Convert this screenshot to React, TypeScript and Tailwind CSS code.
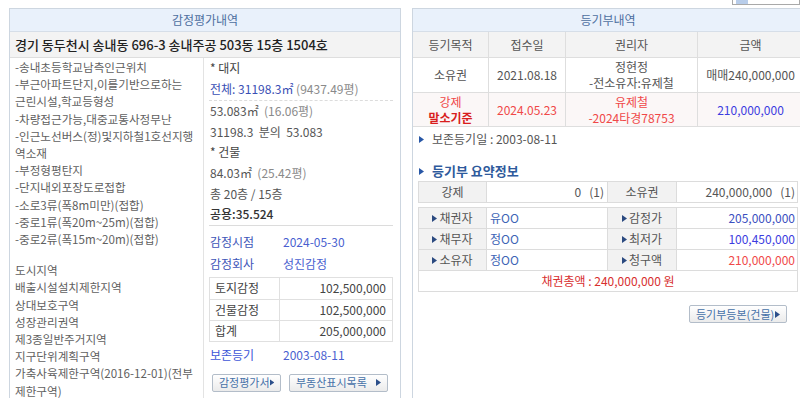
import React from "react"

const Tri = ({ className = "" }: { className?: string }) => (
  <svg width="5" height="7" viewBox="0 0 5 7" className={className}>
    <polygon points="0,0 5,3.5 0,7" fill="currentColor" />
  </svg>
)

function Btn({ label, w }: { label: string; w: string }) {
  return (
    <button
      className={`${w} h-[18px] pl-[6px] pr-[6px] border border-[#b3bdc9] rounded-[2px] bg-linear-to-b from-white to-[#ebebeb] text-[11px] leading-none text-[#4671a8] flex items-center justify-between`}
    >
      <span>{label}</span>
      <Tri className="text-[#2c4f8a]" />
    </button>
  )
}

const descA = [
  "-송내초등학교남측인근위치",
  "-부근아파트단지,이를기반으로하는",
  "근린시설,학교등형성",
  "-차량접근가능,대중교통사정무난",
  "-인근노선버스(정)및지하철1호선지행",
  "역소재",
  "-부정형평탄지",
  "-단지내외포장도로접합",
  "-소로3류(폭8m미만)(접합)",
  "-중로1류(폭20m~25m)(접합)",
  "-중로2류(폭15m~20m)(접합)",
]

const descB = [
  "도시지역",
  "배출시설설치제한지역",
  "상대보호구역",
  "성장관리권역",
  "제3종일반주거지역",
  "지구단위계획구역",
  "가축사육제한구역(2016-12-01)(전부",
  "제한구역)",
]

function LeftPanel() {
  return (
    <div className="w-[392px] shrink-0 border border-[#cdd6e0] bg-white">
      <div className="h-[23px] bg-[#e9f1fb] border-b border-[#d6dee8] flex items-center justify-center text-[12px] text-[#4d6f9f]">
        감정평가내역
      </div>
      <div className="h-[26px] bg-[#f3f3f3] border-b border-[#dedede] flex items-center px-[5px] text-[13px] font-medium text-[#222]">
        경기 동두천시 송내동 696-3 송내주공 503동 15층 1504호
      </div>
      <div className="flex">
        {/* description */}
        <div className="w-[194px] shrink-0 border-r border-[#e3e3e3] pl-[5px] text-[11.6px] leading-[17.2px] text-[#5f5f5f] whitespace-nowrap overflow-hidden">
          <div className="pt-[1px]">
            {descA.map((t) => (
              <div key={t}>{t}</div>
            ))}
          </div>
          <div className="mt-[14px]">
            {descB.map((t) => (
              <div key={t}>{t}</div>
            ))}
          </div>
        </div>

        {/* area / appraisal */}
        <div className="flex-1 pl-[5px] pr-[7px] text-[12px] text-[#555] whitespace-nowrap">
          <div className="leading-[20.6px] pb-[1px] border-b border-dashed border-[#dcdcdc] px-[1px]">
            <div className="text-[#444]">* 대지</div>
            <div>
              <span className="text-[#3a4fb4]">전체: 31198.3㎡</span>{" "}
              <span className="text-[#8a8a8a]">(9437.49평)</span>
            </div>
          </div>
          <div className="leading-[20.6px] border-b border-[#dcdcdc] px-[1px]">
            <div>
              53.083㎡ <span className="text-[#8a8a8a]">&nbsp;(16.06평)</span>
            </div>
            <div>31198.3&nbsp; 분의&nbsp; 53.083</div>
            <div className="text-[#444]">* 건물</div>
            <div>
              84.03㎡ <span className="text-[#8a8a8a]">&nbsp;(25.42평)</span>
            </div>
            <div>총 20층 / 15층</div>
            <div className="text-[#333] font-medium">공용:35.524</div>
          </div>
          <div className="pt-[5px] leading-[22px] px-[1px]">
            <div className="flex">
              <span className="w-[73px] text-[#3d55b8]">감정시점</span>
              <span className="text-[#4a5fd0]">2024-05-30</span>
            </div>
            <div className="flex">
              <span className="w-[73px] text-[#3d55b8]">감정회사</span>
              <span className="text-[#4a5fd0]">성진감정</span>
            </div>
          </div>
          <div className="mt-[2px] border border-[#e0e0e0] text-[#444]">
            {[
              ["토지감정", "102,500,000"],
              ["건물감정", "102,500,000"],
              ["합계", "205,000,000"],
            ].map(([k, v], i) => (
              <div key={k} className={`flex h-[21px] items-center ${i > 0 ? "border-t border-[#e0e0e0]" : ""}`}>
                <div className="w-[70px] h-full flex items-center pl-[5px] border-r border-[#e0e0e0]">{k}</div>
                <div className="flex-1 text-right pr-[6px]">{v}</div>
              </div>
            ))}
          </div>
          <div className="mt-[1px] leading-[24px] flex px-[1px]">
            <span className="w-[73px] text-[#3d55d8]">보존등기</span>
            <span className="text-[#4a5fd0]">2003-08-11</span>
          </div>
          <div className="mt-[7px] flex gap-[8px] pl-[3px]">
            <Btn label="감정평가서" w="w-[69px]" />
            <Btn label="부동산표시목록" w="w-[99px]" />
          </div>
        </div>
      </div>
    </div>
  )
}

const cols = "grid grid-cols-[76px_77px_132px_105px]"
const sumCols = "grid grid-cols-[68px_121px_69px_121px]"

function RightPanel() {
  return (
    <div className="w-[392px] shrink-0 border border-[#cdd6e0] bg-white text-[12px]">
      <div className="h-[23px] bg-[#e9f1fb] border-b border-[#d6dee8] flex items-center justify-center text-[12px] text-[#4d6f9f]">
        등기부내역
      </div>

      {/* register table */}
      <div className={`${cols} h-[26px] bg-[#f3f3f3] border-b border-[#dedede] text-[#555]`}>
        {["등기목적", "접수일", "권리자", "금액"].map((h, i) => (
          <div key={h} className={`flex items-center justify-center ${i < 3 ? "border-r border-[#dedede]" : ""}`}>
            {h}
          </div>
        ))}
      </div>
      <div className={`${cols} h-[35px] border-b border-[#dedede] text-[#555] leading-[16px] text-center`}>
        <div className="flex items-center justify-center border-r border-[#dedede]">소유권</div>
        <div className="flex items-center justify-center border-r border-[#dedede]">2021.08.18</div>
        <div className="flex flex-col items-center justify-center border-r border-[#dedede]">
          <div>정현정</div>
          <div>-전소유자:유제철</div>
        </div>
        <div className="flex items-center justify-center">매매240,000,000</div>
      </div>
      <div className={`${cols} h-[34px] border-b border-[#dedede] bg-[#fbf7f7] leading-[16px] text-center text-[#f04848]`}>
        <div className="flex flex-col items-center justify-center border-r border-[#dedede]">
          <div>강제</div>
          <div className="font-bold text-[#d81e1e]">말소기준</div>
        </div>
        <div className="flex items-center justify-center border-r border-[#dedede]">2024.05.23</div>
        <div className="flex flex-col items-center justify-center border-r border-[#dedede]">
          <div>유제철</div>
          <div>-2024타경78753</div>
        </div>
        <div className="flex items-center justify-center text-[#3c3ce0]">210,000,000</div>
      </div>

      <div className="px-[5px]">
        <div className="mt-[2px] h-[20px] flex items-center text-[#555]">
          <Tri className="text-[#2857a6] ml-[1px] mr-[8px]" />
          보존등기일 : 2003-08-11
        </div>
        <div className="mt-[12px] h-[20px] flex items-center text-[13px] font-bold text-[#2e5a9c]">
          <Tri className="text-[#2857a6] ml-[1px] mr-[8px]" />
          등기부 요약정보
        </div>

        {/* summary */}
        <div className={`${sumCols} h-[22px] border border-[#dcdcdc] text-[#555]`}>
          <div className="flex items-center justify-center bg-[#f2f2f2] border-r border-[#dcdcdc]">강제</div>
          <div className="flex items-center justify-end pr-[3px] border-r border-[#dcdcdc] whitespace-pre">0   (1)</div>
          <div className="flex items-center justify-center bg-[#f2f2f2] border-r border-[#dcdcdc]">소유권</div>
          <div className="flex items-center justify-end pr-[3px] whitespace-pre">240,000,000   (1)</div>
        </div>

        <div className="mt-[4px] border border-[#dcdcdc]">
          {[
            ["채권자", "유OO", "감정가", "205,000,000", "text-[#3b4fc0]"],
            ["채무자", "정OO", "최저가", "100,450,000", "text-[#3c3ce0]"],
            ["소유자", "정OO", "청구액", "210,000,000", "text-[#f04848]"],
          ].map(([a, b, c, d, color]) => (
            <div key={a} className={`${sumCols} h-[21px] border-b border-[#dcdcdc] text-[#555]`}>
              <div className="flex items-center justify-center gap-[2px] bg-[#f2f2f2] border-r border-[#dcdcdc]">
                <Tri className="text-[#2b4a80]" />
                {a}
              </div>
              <div className="flex items-center pl-[3px] border-r border-[#dcdcdc] text-[#3d64b6]">{b}</div>
              <div className="flex items-center justify-center gap-[2px] bg-[#f2f2f2] border-r border-[#dcdcdc]">
                <Tri className="text-[#2b4a80]" />
                {c}
              </div>
              <div className={`flex items-center justify-end pr-[3px] ${color}`}>{d}</div>
            </div>
          ))}
          <div className="h-[20px] flex items-center justify-center text-[#d83030]">
            채권총액 : 240,000,000 원
          </div>
        </div>

        <div className="mt-[13px] flex justify-end pr-[11px]">
          <Btn label="등기부등본(건물)" w="w-[98px]" />
        </div>
      </div>
    </div>
  )
}

export default function App() {
  return (
    <div className="w-[800px] h-[398px] overflow-hidden bg-white font-['Noto_Sans_CJK_KR',sans-serif]">
      <div className="h-[8px] flex justify-end">
        <div className="w-[68px] h-[5px] border border-t-0 border-[#a9a9a9] bg-white pl-[3px]">
          <div className="w-[12px] h-[4px] bg-[#b8cdea]" />
        </div>
      </div>
      <div className="flex pl-[9px] gap-[11px]">
        <LeftPanel />
        <RightPanel />
      </div>
    </div>
  )
}
